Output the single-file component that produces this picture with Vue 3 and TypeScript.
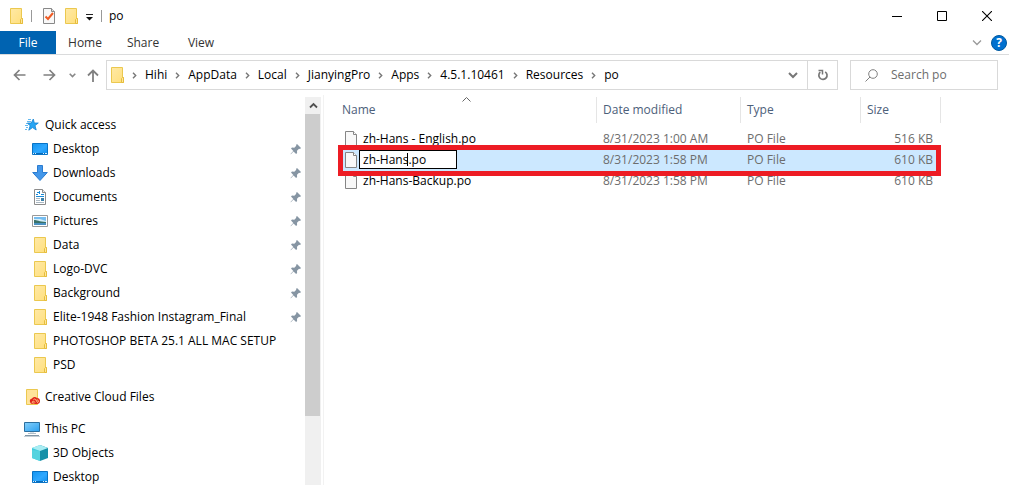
<script setup lang="ts">
import { ref } from 'vue'

type IconName = 'folder' | 'star' | 'desktop' | 'download' | 'document' | 'picture' | 'cloud' | 'pc' | 'cube'

interface NavItem {
  label: string
  icon: IconName
  root?: boolean
  pinned?: boolean
  gap?: boolean
}

interface FileRow {
  name: string
  modified: string
  type: string
  size: string
  renaming?: boolean
}

const tabs: string[] = ['Home', 'Share', 'View']
const crumbs: string[] = ['Hihi', 'AppData', 'Local', 'JianyingPro', 'Apps', '4.5.1.10461', 'Resources', 'po']

const navItems: NavItem[] = [
  { label: 'Quick access', icon: 'star', root: true },
  { label: 'Desktop', icon: 'desktop', pinned: true },
  { label: 'Downloads', icon: 'download', pinned: true },
  { label: 'Documents', icon: 'document', pinned: true },
  { label: 'Pictures', icon: 'picture', pinned: true },
  { label: 'Data', icon: 'folder', pinned: true },
  { label: 'Logo-DVC', icon: 'folder', pinned: true },
  { label: 'Background', icon: 'folder', pinned: true },
  { label: 'Elite-1948 Fashion Instagram_Final', icon: 'folder', pinned: true },
  { label: 'PHOTOSHOP BETA 25.1 ALL MAC SETUP', icon: 'folder' },
  { label: 'PSD', icon: 'folder' },
  { label: 'Creative Cloud Files', icon: 'cloud', root: true, gap: true },
  { label: 'This PC', icon: 'pc', root: true, gap: true },
  { label: '3D Objects', icon: 'cube' },
  { label: 'Desktop', icon: 'desktop' },
]

const files: FileRow[] = [
  { name: 'zh-Hans - English.po', modified: '8/31/2023 1:00 AM', type: 'PO File', size: '516 KB' },
  { name: 'zh-Hans.po', modified: '8/31/2023 1:58 PM', type: 'PO File', size: '610 KB', renaming: true },
  { name: 'zh-Hans-Backup.po', modified: '8/31/2023 1:58 PM', type: 'PO File', size: '610 KB' },
]

const newName = ref('zh-Hans.po')
const query = ref('')
</script>

<template>
  <div class="window">
    <svg class="defs" aria-hidden="true">
      <defs>
        <linearGradient id="folderFill" x1="0" y1="0" x2="1" y2="1">
          <stop offset="0" stop-color="#ffe9a6" />
          <stop offset="1" stop-color="#ffdf7c" />
        </linearGradient>
        <linearGradient id="screenFill" x1="0" y1="0" x2="1" y2="1">
          <stop offset="0" stop-color="#1294f0" />
          <stop offset="0.55" stop-color="#2fa8ff" />
          <stop offset="1" stop-color="#0f8fee" />
        </linearGradient>
        <linearGradient id="pcFill" x1="0" y1="0" x2="1" y2="1">
          <stop offset="0" stop-color="#85d0fb" />
          <stop offset="1" stop-color="#2ba0f0" />
        </linearGradient>
        <symbol id="folder" viewBox="0 0 16 16">
          <path d="M2.500 .5h11v10h1v5h-12z" fill="url(#folderFill)" stroke="#ebc84f" />
          <path d="M12.500 15.500v-4l1-1h1v5z" fill="#ffe69a" stroke="#e6bd3d" />
        </symbol>
        <symbol id="star" viewBox="0 0 16 16">
          <path d="M9.300 2l1 4h4l-3.300 2.600 1.200 4.400-3.700-2.400-3.700 2.600 1.300-4.400-2.800-2.800h4z" fill="#27a5f3" stroke="#1483d2" stroke-width=".8" />
          <path d="M4 2.500h3M3 4.500h4M2 6.500h1M1 8.500h3M2 10.500h2M1 12.500h2" stroke="#63b9f0" />
        </symbol>
        <symbol id="desktop" viewBox="0 0 16 16">
          <path d="M.5 2.500h15v11H.5z" fill="url(#screenFill)" stroke="#0873c6" />
          <path d="M1 12.500h14" stroke="#086bb9" />
          <path d="M1 12.500h1M3 12.500h1M11 12.500h1M13 12.500h2" stroke="#d8f0ff" />
        </symbol>
        <symbol id="download" viewBox="0 0 16 16">
          <path d="M5.500.5h5v7h4.800L8 15.500.7 7.500h4.800z" fill="#4397ea" stroke="#2b7cd0" />
        </symbol>
        <symbol id="document" viewBox="0 0 16 16">
          <path d="M2.500.5h8l3 3v12h-11z" fill="#fff" stroke="#8c8c8c" />
          <path d="M10.500.5v3h3" fill="#eee" stroke="#8c8c8c" />
          <path d="M4 5.500h2M5 3.500h2M7.500 2v3M9 5.500h3M4 7.500h8" stroke="#1a8ad6" />
          <path d="M4 9.500h4M4 11.500h4M4 13.500h8" stroke="#aab8c3" />
          <path d="M9 9h3v3H9z" fill="#3a7fa8" />
        </symbol>
        <symbol id="picture" viewBox="0 0 16 16">
          <path d="M.5 2.500h15v11H.5z" fill="#fff" stroke="#999" />
          <path d="M2 4h12v8H2z" fill="#76bdf0" />
          <path d="M2 6h6l6 2v1H2z" fill="#d4eef8" />
          <path d="M2 7c3 0 5 1.500 12 2v1H2z" fill="#3a7269" />
          <path d="M2 10h12v2H2z" fill="#4a91c2" />
        </symbol>
        <symbol id="cloud" viewBox="0 0 16 16">
          <path d="M2.500.5h11v15h-11z" fill="#ffe39a" stroke="#ebc84f" />
          <path d="M8 9.500a3 3 0 0 1 5-.5 3 3 0 0 1 0 6H9a2.800 2.800 0 0 1-1-5.500z" fill="#e1251b" />
          <path d="M11 13.500L9.500 12a1.300 1.300 0 0 0-1 2h2M9.500 10.500a1.500 1.500 0 0 1 2 0l2 3a1.300 1.300 0 0 0 0-2.500h-1" fill="none" stroke="#ffe39a" stroke-width=".8" />
        </symbol>
        <symbol id="pc" viewBox="0 0 16 16">
          <path d="M.5 1.500h15v9H.5z" fill="url(#pcFill)" stroke="#2b6f9f" />
          <path d="M6 12h4M4 12.500h8" stroke="#b0bec8" />
          <path d="M1 14.500h14" stroke="#8296a5" />
          <path d="M0 15.500h16" stroke="#c5cfd6" />
        </symbol>
        <symbol id="cube" viewBox="0 0 16 16">
          <path d="M0 3l8-3v16l-8-3z" fill="#3ecbdc" />
          <path d="M8 0l8 3v10l-8 3z" fill="#1590a8" />
          <path d="M0 3l8-3 8 3-8 3z" fill="#a9edf3" />
          <path d="M0 5l8 1v10l-8-3z" fill="#55d3df" />
        </symbol>
        <symbol id="pin" viewBox="0 0 12 12">
          <path d="M7 1l4 4-1 1-1-.2-2 2 .1 2.200-1 1-2.600-2.600L.8 11.200l-.3-.3L3.300 8 1 5.600l1-1 2.300.1 2-2L6 2z" fill="#8695a3" />
        </symbol>
        <symbol id="file" viewBox="0 0 14 16">
          <path d="M1.500.5h8l3 3v12h-11z" fill="#f8f8f8" stroke="#858585" />
          <path d="M9.500.5v3h3" fill="#fff" stroke="#858585" />
        </symbol>
      </defs>
    </svg>

    <header class="titlebar">
      <svg class="icon16"><use href="#folder" /></svg>
      <i class="divider"></i>
      <button class="plain" aria-label="Properties">
        <svg class="icon16" viewBox="0 0 16 16">
          <path d="M2.500.5h8l3 3v12h-11z" fill="#f8f8f8" stroke="#888" />
          <path d="M10.500.5v3h3" fill="#ddd" stroke="#888" />
          <path d="M4.500 8.500l2.500 2.500 5-6" fill="none" stroke="#ef5b24" stroke-width="2" />
        </svg>
      </button>
      <button class="plain new-folder" aria-label="New folder"><svg class="icon16"><use href="#folder" /></svg></button>
      <button class="plain customize" aria-label="Customize toolbar">
        <svg width="8" height="8" viewBox="0 0 8 8"><path d="M0 1.500h7" stroke="#222" /><path d="M0 4h7L3.500 7.500z" fill="#111" /></svg>
      </button>
      <i class="divider"></i>
      <span class="title">po</span>
      <div class="controls">
        <button aria-label="Minimize"><svg width="10" height="10"><path d="M0 5.500h10" stroke="#000" /></svg></button>
        <button aria-label="Maximize"><svg width="10" height="10"><path d="M.5.5h9v9h-9z" fill="none" stroke="#000" /></svg></button>
        <button aria-label="Close"><svg width="10" height="10"><path d="M0 0l10 10M10 0L0 10" stroke="#000" stroke-width="1.100" /></svg></button>
      </div>
    </header>

    <nav class="ribbon" aria-label="Ribbon">
      <button class="file-tab">File</button>
      <button v-for="tab in tabs" :key="tab" class="tab">{{ tab }}</button>
      <div class="ribbon-end">
        <button class="plain" aria-label="Expand ribbon">
          <svg width="10" height="6"><path d="M1 .5l4 4 4-4" fill="none" stroke="#999" stroke-width="1.300" /></svg>
        </button>
        <button class="help" aria-label="Help">?</button>
      </div>
    </nav>

    <div class="navbar">
      <button class="plain back" aria-label="Back">
        <svg width="13" height="12"><path d="M12.500 6H1.500M6.500 1l-5 5 5 5" fill="none" stroke="#808080" stroke-width="1.700" /></svg>
      </button>
      <button class="plain forward" aria-label="Forward">
        <svg width="13" height="12"><path d="M.5 6h11M6.500 1l5 5-5 5" fill="none" stroke="#808080" stroke-width="1.700" /></svg>
      </button>
      <button class="plain recent" aria-label="Recent locations">
        <svg width="7" height="5"><path d="M.7.7l2.800 2.800L6.300.7" fill="none" stroke="#888" stroke-width="1.600" /></svg>
      </button>
      <button class="plain up" aria-label="Up">
        <svg width="12" height="13"><path d="M6 13V1.500M1 6.500l5-5 5 5" fill="none" stroke="#808080" stroke-width="1.800" /></svg>
      </button>
      <div class="address">
        <svg class="icon16"><use href="#folder" /></svg>
        <ol class="crumbs">
          <li v-for="crumb in crumbs" :key="crumb">
            <svg class="chevron" width="5" height="7"><path d="M1 .8l2.700 2.700L1 6.200" fill="none" stroke="#777" stroke-width="1.400" /></svg>
            <a href="#">{{ crumb }}</a>
          </li>
        </ol>
        <button class="plain history" aria-label="Previous locations">
          <svg width="10" height="7"><path d="M1 1l4 4 4-4" fill="none" stroke="#777" stroke-width="2" /></svg>
        </button>
        <button class="refresh" aria-label="Refresh">
          <svg width="12" height="12" viewBox="0 0 12 12"><path d="M8.200 2.900A4.100 4.100 0 1 1 3.300 3.200" fill="none" stroke="#777" stroke-width="1.700" /><path d="M1.500 1.500h4V5.500" fill="none" stroke="#777" stroke-width="1.500" /></svg>
        </button>
      </div>
      <label class="search">
        <svg width="13" height="13"><circle cx="8" cy="5" r="4.300" fill="none" stroke="#808080" /><path d="M5 8L.5 12.500" stroke="#808080" /></svg>
        <input v-model="query" type="text" placeholder="Search po" aria-label="Search po" />
      </label>
    </div>

    <div class="body">
      <aside class="sidebar">
        <ul>
          <li v-for="(item, i) in navItems" :key="i" :class="{ root: item.root, gap: item.gap }">
            <a href="#">
              <svg class="icon16"><use :href="'#' + item.icon" /></svg>
              <span>{{ item.label }}</span>
              <svg v-if="item.pinned" class="pin"><use href="#pin" /></svg>
            </a>
          </li>
        </ul>
      </aside>
      <div class="scrollbar">
        <button aria-label="Scroll up"><svg width="9" height="7"><path d="M1 5.500L4.500 2 8 5.500" fill="none" stroke="#505050" stroke-width="1.800" /></svg></button>
        <div class="thumb"></div>
      </div>
      <main class="files">
        <table>
          <colgroup><col class="c-name" /><col class="c-date" /><col class="c-type" /><col class="c-size" /></colgroup>
          <thead>
            <tr>
              <th>Name<svg class="sort" width="9" height="5"><path d="M.5 4.500l4-4 4 4" fill="none" stroke="#666" /></svg></th>
              <th>Date modified</th>
              <th>Type</th>
              <th>Size</th>
            </tr>
          </thead>
          <tbody>
            <tr v-for="file in files" :key="file.name" :class="{ selected: file.renaming }">
              <td>
                <div class="name">
                  <svg class="file-icon"><use href="#file" /></svg>
                  <div v-if="file.renaming" class="rename">
                    <input v-model="newName" type="text" aria-label="File name" />
                    <i class="caret"></i>
                  </div>
                  <span v-else>{{ file.name }}</span>
                </div>
                <i v-if="file.renaming" class="frame"></i>
              </td>
              <td>{{ file.modified }}</td>
              <td>{{ file.type }}</td>
              <td>{{ file.size }}</td>
            </tr>
          </tbody>
        </table>
      </main>
    </div>
  </div>
</template>

<style>
body {
  background: #fff;
}
</style>

<style scoped>
.window {
  display: flex;
  flex-direction: column;
  height: 100vh;
  overflow: hidden;
  background: #fff;
  color: #000;
  font: 12px/16px "Segoe UI", "Open Sans", "Noto Sans", sans-serif;
}
.window * {
  box-sizing: border-box;
}
svg {
  display: block;
  flex: none;
}
.defs {
  position: absolute;
  width: 0;
  height: 0;
}
button,
input {
  font: inherit;
  color: inherit;
  border: 0;
  padding: 0;
  margin: 0;
  background: none;
}
a {
  color: inherit;
  text-decoration: none;
}
.plain {
  display: flex;
  align-items: center;
  justify-content: center;
}
.icon16 {
  width: 16px;
  height: 16px;
}
.titlebar {
  display: flex;
  align-items: center;
  height: 31px;
  flex: none;
  padding-left: 8px;
}
.divider {
  width: 1px;
  height: 12px;
  margin: 0 9px 0 7px;
  background: #999;
}
.new-folder {
  margin-left: 6px;
}
.customize {
  margin: 2px 0 0 7px;
}
.title {
  margin-left: -2px;
}
.controls {
  display: flex;
  align-self: stretch;
  margin-left: auto;
}
.controls button {
  display: flex;
  align-items: center;
  justify-content: center;
  width: 45px;
}
.ribbon {
  display: flex;
  flex: none;
  height: 24px;
  border-bottom: 1px solid #dadbdc;
}
.file-tab {
  width: 56px;
  background: #0063b1;
  color: #fff;
}
.tab {
  width: 58px;
  color: #333;
}
.ribbon-end {
  display: flex;
  align-items: center;
  gap: 9px;
  margin-left: auto;
  padding-right: 2px;
}
.help {
  width: 16px;
  height: 16px;
  border: 1px solid #00599f;
  border-radius: 50%;
  background: #0070cf;
  color: #fff;
  font-weight: 700;
  line-height: 14px;
}
.navbar {
  display: flex;
  align-items: center;
  flex: none;
  height: 40px;
  padding: 0 11px 0 13px;
}
.forward {
  margin-left: 17px;
}
.recent {
  margin-left: 13px;
}
.up {
  margin: 0 7px 0 11px;
}
.address {
  display: flex;
  align-items: center;
  flex: 1;
  height: 30px;
  padding-left: 2px;
  border: 1px solid #d9d9d9;
}
.crumbs {
  display: flex;
  flex: 1;
  margin: 0;
  padding: 0 0 0 7px;
  list-style: none;
}
.crumbs li {
  display: flex;
  align-items: center;
  gap: 8px;
  margin-right: 8px;
}
.history {
  width: 28px;
  height: 28px;
}
.refresh {
  display: flex;
  align-items: center;
  justify-content: center;
  width: 30px;
  height: 28px;
  border-left: 1px solid #d9d9d9;
}
.search {
  display: flex;
  align-items: center;
  gap: 13px;
  width: 148px;
  height: 30px;
  margin-left: 12px;
  padding-left: 14px;
  border: 1px solid #d9d9d9;
}
.search input {
  flex: 1;
  min-width: 0;
  outline: 0;
}
.search input::placeholder {
  color: #6d6d6d;
  opacity: 1;
}
.body {
  display: flex;
  flex: 1;
  min-height: 0;
}
.sidebar {
  width: 305px;
  flex: none;
  overflow: hidden;
}
.sidebar ul {
  margin: 0;
  padding: 18px 0 0;
  list-style: none;
}
.sidebar a {
  display: flex;
  align-items: center;
  gap: 5px;
  height: 24px;
  padding: 0 3px 0 32px;
  white-space: nowrap;
}
.sidebar .root a {
  padding-left: 24px;
}
.sidebar .gap {
  margin-top: 8px;
}
.pin {
  width: 12px;
  height: 12px;
  margin-left: auto;
}
.scrollbar {
  display: flex;
  flex-direction: column;
  flex: none;
  width: 16px;
  margin-top: 2px;
  background: #f0f0f0;
}
.scrollbar button {
  display: flex;
  align-items: center;
  justify-content: center;
  height: 17px;
}
.thumb {
  width: 15px;
  height: 82%;
  max-height: 302px;
  background: #cdcdcd;
}
.files {
  flex: 1;
  margin-left: 2px;
  padding: 2px 0 0 14px;
  border-left: 1px solid #f2f2f2;
}
table {
  width: 603px;
  table-layout: fixed;
  border-collapse: separate;
  border-spacing: 0;
}
.c-name {
  width: 259px;
}
.c-date {
  width: 144px;
}
.c-type {
  width: 120px;
}
.c-size {
  width: 80px;
}
th {
  position: relative;
  height: 26px;
  padding: 0 6px;
  border-right: 1px solid #e5e5e5;
  color: #4c607a;
  font-weight: 400;
  text-align: left;
}
th:first-child {
  padding-left: 4px;
}
.sort {
  position: absolute;
  top: 0;
  left: 124px;
}
tbody::before {
  content: "";
  display: block;
  height: 6px;
}
td {
  height: 21px;
  padding: 0 6px 2px;
  color: #6d6d6d;
  white-space: nowrap;
}
td:first-child {
  padding: 0 0 2px 6px;
  color: #000;
}
td:last-child {
  padding-right: 8px;
  text-align: right;
}
.selected {
  position: relative;
}
.selected td {
  background: #cce8ff;
}
.name {
  display: flex;
  align-items: center;
  height: 19px;
}
.file-icon {
  width: 14px;
  height: 16px;
}
.name span {
  margin-left: 5px;
}
.rename {
  position: relative;
  margin-left: 1px;
}
.rename input {
  display: block;
  width: 98px;
  height: 19px;
  padding: 0 3px;
  border: 1px solid #000;
  background: #fff;
  outline: 0;
}
.caret {
  position: absolute;
  top: 3px;
  left: 48px;
  width: 1px;
  height: 13px;
  background: #000;
}
.frame {
  position: absolute;
  inset: -5px 0;
  border: 5px solid #ed1c24;
  pointer-events: none;
}
</style>
